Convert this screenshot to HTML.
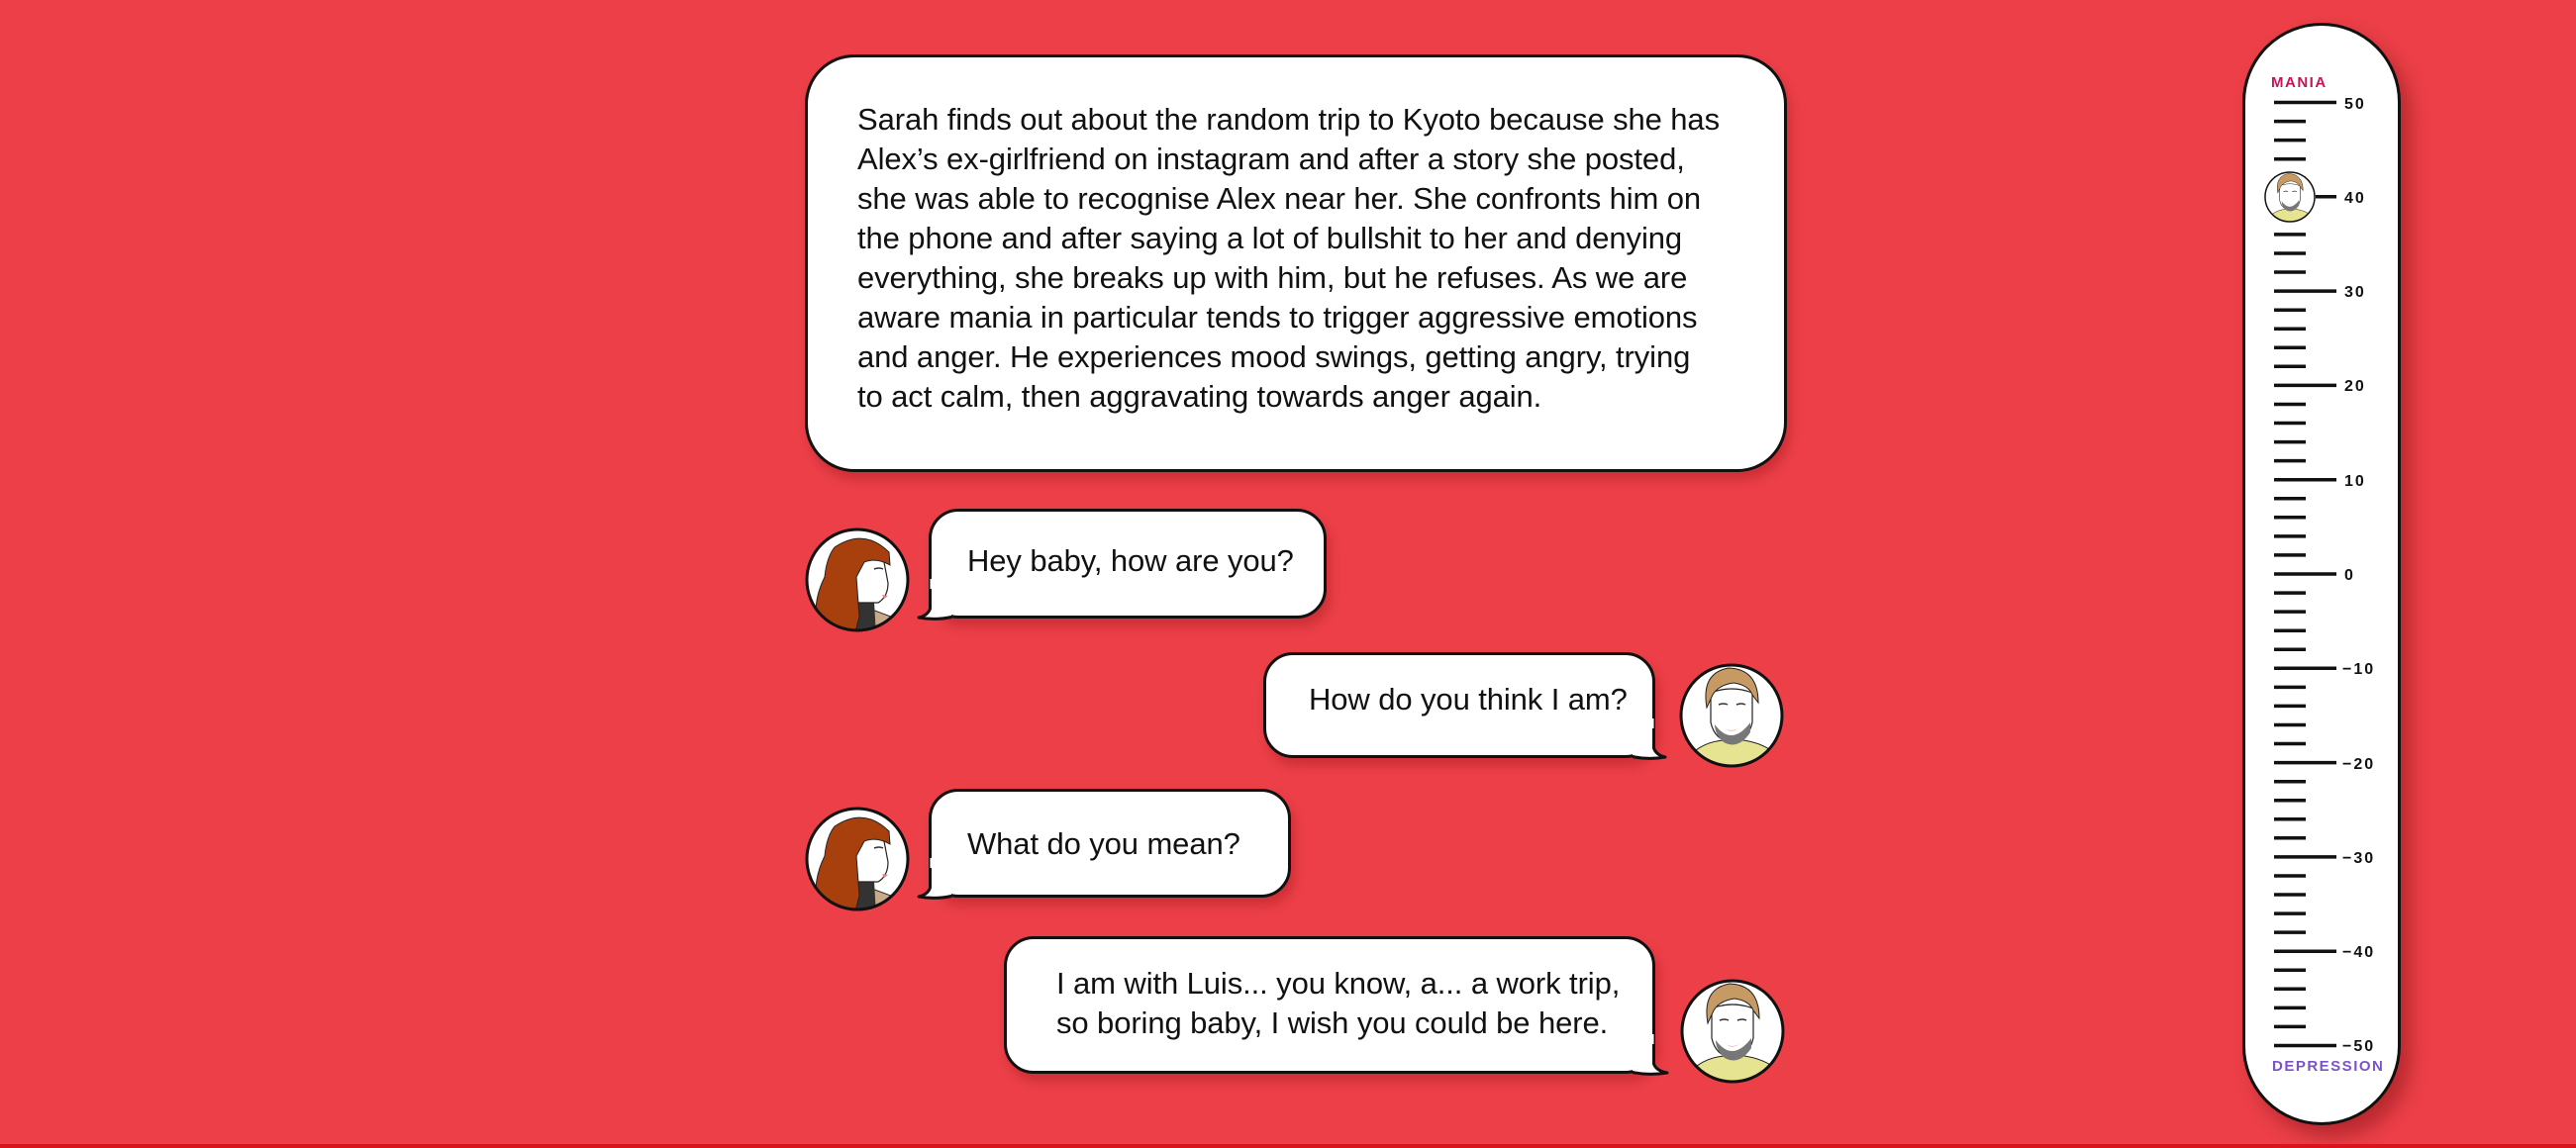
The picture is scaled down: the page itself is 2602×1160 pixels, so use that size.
<!DOCTYPE html>
<html><head><meta charset="utf-8"><style>
html,body{margin:0;padding:0}
body{width:2602px;height:1160px;background:#ec3f48;position:relative;overflow:hidden;font-family:"Liberation Sans",Arial,sans-serif;color:#111}
.strip{position:absolute;left:0;right:0;bottom:0;height:4px;background:#d9141c}
.box{position:absolute;background:#fff;border:3px solid #111;box-sizing:border-box;border-radius:30px;box-shadow:4px 8px 10px rgba(120,0,0,.25)}
.main{left:813px;top:55px;width:992px;height:422px;border-radius:50px}
.t{position:absolute;font-size:31px;line-height:40px;letter-spacing:-0.1px;white-space:nowrap}
.av{position:absolute;width:106px;height:106px}
.therm{position:absolute;left:2265px;top:23px;width:160px;height:1114px;background:#fff;border:3px solid #111;box-sizing:border-box;border-radius:80px;box-shadow:10px 12px 18px rgba(90,0,0,.35)}
.lab{position:absolute;font-weight:bold;font-size:15px;letter-spacing:1.5px;line-height:20px}
.tail{position:absolute;overflow:visible}
</style></head><body>
<svg width="0" height="0" style="position:absolute">
<defs>
<symbol id="sarah" viewBox="0 0 106 106">
<clipPath id="cs"><circle cx="53" cy="53" r="50"/></clipPath>
<circle cx="53" cy="53" r="51" fill="#fff"/>
<g clip-path="url(#cs)">
<path d="M60 80 L100 95 L100 110 L20 110 Z" fill="#c9ab8c" stroke="#222" stroke-width="1"/>
<path d="M40 75 L70 75 L72 110 L40 110 Z" fill="#333"/>
<path d="M48 40 Q66 20 80 35 L84 56 Q84 70 74 76 L54 76 Q46 60 48 40Z" fill="#fff" stroke="#222" stroke-width="1.2"/>
<path d="M78 68 l6 1 l-4 3 z" fill="#e08080"/>
<path d="M30 20 Q60 0 85 25 L86 38 Q72 30 60 35 L52 50 L55 90 L50 110 L15 110 Q5 80 20 50 Q22 30 30 20Z" fill="#a8400d" stroke="#222" stroke-width="1"/>
<path d="M70 42 q5 -2 9 0" stroke="#333" stroke-width="1.5" fill="none"/>
</g>
<circle cx="53" cy="53" r="51" fill="none" stroke="#111" stroke-width="3"/>
</symbol>
<symbol id="alex" viewBox="0 0 106 106">
<clipPath id="ca"><circle cx="53" cy="53" r="50"/></clipPath>
<circle cx="53" cy="53" r="51" fill="#fff"/>
<g clip-path="url(#ca)">
<path d="M5 100 Q20 80 45 78 L65 78 Q90 82 100 95 L100 110 L5 110Z" fill="#e6e391" stroke="#222" stroke-width="1"/>
<path d="M32 30 Q53 22 74 30 L74 60 Q70 78 53 80 Q36 78 32 60Z" fill="#fff" stroke="#222" stroke-width="1.2"/>
<path d="M36 62 Q53 85 72 60 L72 70 Q60 88 45 80 Q36 72 36 62Z" fill="#777"/>
<path d="M46 66 q7 4 14 0 q-7 5 -14 0z" fill="#d88"/>
<path d="M40 42 q5 -2 9 0 M58 42 q5 -2 9 0" stroke="#333" stroke-width="1.5" fill="none"/>
</g>
<path d="M28 45 Q22 10 50 5 Q80 6 80 40 L74 32 Q70 22 55 20 Q40 22 34 32 Z" fill="#c89a63" stroke="#222" stroke-width="1"/>
<circle cx="53" cy="53" r="51" fill="none" stroke="#111" stroke-width="3"/>
</symbol>
</defs>
</svg>

<div class="box main"></div>
<div class="t" style="left:866px;top:101px">Sarah finds out about the random trip to Kyoto because she has<br>Alex’s ex-girlfriend on instagram and after a story she posted,<br>she was able to recognise Alex near her. She confronts him on<br>the phone and after saying a lot of bullshit to her and denying<br>everything, she breaks up with him, but he refuses. As we are<br>aware mania in particular tends to trigger aggressive emotions<br>and anger. He experiences mood swings, getting angry, trying<br>to act calm, then aggravating towards anger again.</div>

<!-- bubble 1 -->
<div class="box" style="left:938px;top:514px;width:402px;height:111px"></div>
<svg class="tail" style="left:925px;top:585px" width="40" height="45"><path d="M14.5 0 L14.5 30 Q12 37 3 39 Q20 42 36 37 L36 0 Z" fill="#fff"/><path d="M14.5 10 L14.5 30 Q12 37 3 39 Q20 42 36 38.5" fill="none" stroke="#111" stroke-width="3" stroke-linejoin="round"/></svg>
<div class="t" style="left:977px;top:547px">Hey baby, how are you?</div>
<svg class="av" style="left:813px;top:533px"><use href="#sarah"/></svg>

<!-- bubble 2 -->
<div class="box" style="left:1276px;top:659px;width:396px;height:107px"></div>
<svg class="tail" style="left:1640px;top:726px" width="45" height="45"><path d="M30.5 0 L30.5 30 Q33 37 42 39 Q25 42 9 37 L9 0 Z" fill="#fff"/><path d="M30.5 10 L30.5 30 Q33 37 42 39 Q25 42 9 38.5" fill="none" stroke="#111" stroke-width="3" stroke-linejoin="round"/></svg>
<div class="t" style="left:1322px;top:687px">How do you think I am?</div>
<svg class="av" style="left:1696px;top:670px"><use href="#alex"/></svg>

<!-- bubble 3 -->
<div class="box" style="left:938px;top:797px;width:366px;height:110px"></div>
<svg class="tail" style="left:925px;top:867px" width="40" height="45"><path d="M14.5 0 L14.5 30 Q12 37 3 39 Q20 42 36 37 L36 0 Z" fill="#fff"/><path d="M14.5 10 L14.5 30 Q12 37 3 39 Q20 42 36 38.5" fill="none" stroke="#111" stroke-width="3" stroke-linejoin="round"/></svg>
<div class="t" style="left:977px;top:833px">What do you mean?</div>
<svg class="av" style="left:813px;top:815px"><use href="#sarah"/></svg>

<!-- bubble 4 -->
<div class="box" style="left:1014px;top:946px;width:658px;height:139px"></div>
<svg class="tail" style="left:1640px;top:1045px" width="50" height="45"><path d="M30.5 0 L30.5 30 Q33 37 44 39 Q25 42 9 37 L9 0 Z" fill="#fff"/><path d="M30.5 10 L30.5 30 Q33 37 44 39 Q25 42 9 38.5" fill="none" stroke="#111" stroke-width="3" stroke-linejoin="round"/></svg>
<div class="t" style="left:1067px;top:974px">I am with Luis... you know, a... a work trip,<br>so boring baby, I wish you could be here.</div>
<svg class="av" style="left:1697px;top:989px"><use href="#alex"/></svg>

<!-- thermometer -->
<div class="therm"></div>
<div class="lab" style="left:2294px;top:74px;color:#c2185b">MANIA</div>
<div class="lab" style="left:2295px;top:1068px;color:#7b52c9">DEPRESSION</div>
<svg style="position:absolute;left:0;top:0" width="2602" height="1160">
<path stroke="#111" stroke-width="3.5" fill="none" d="
M2297 103.5h63 M2297 122.6h32 M2297 141.6h32 M2297 160.7h32 M2297 179.7h32
M2297 198.8h63 M2297 217.9h32 M2297 236.9h32 M2297 256h32 M2297 275h32
M2297 294.1h63 M2297 313.2h32 M2297 332.2h32 M2297 351.3h32 M2297 370.3h32
M2297 389.4h63 M2297 408.5h32 M2297 427.5h32 M2297 446.6h32 M2297 465.6h32
M2297 484.7h63 M2297 503.8h32 M2297 522.8h32 M2297 541.9h32 M2297 560.9h32
M2297 580h63 M2297 599.1h32 M2297 618.1h32 M2297 637.2h32 M2297 656.2h32
M2297 675.3h63 M2297 694.4h32 M2297 713.4h32 M2297 732.5h32 M2297 751.5h32
M2297 770.6h63 M2297 789.7h32 M2297 808.7h32 M2297 827.8h32 M2297 846.8h32
M2297 865.9h63 M2297 885h32 M2297 904h32 M2297 923.1h32 M2297 942.1h32
M2297 961.2h63 M2297 980.3h32 M2297 999.3h32 M2297 1018.4h32 M2297 1037.4h32
M2297 1056.5h63"/>
<g font-family="Liberation Sans, Arial, sans-serif" font-weight="bold" font-size="16" letter-spacing="2" fill="#111">
<text x="2368" y="110">50</text><text x="2368" y="205">40</text><text x="2368" y="300">30</text>
<text x="2368" y="395">20</text><text x="2368" y="491">10</text><text x="2368" y="586">0</text>
<text x="2366" y="681">−10</text><text x="2366" y="777">−20</text><text x="2366" y="872">−30</text>
<text x="2366" y="967">−40</text><text x="2366" y="1062">−50</text>
</g>
<circle cx="2313" cy="199" r="26" fill="#fff"/>
<svg x="2287" y="173" width="52" height="52" viewBox="0 0 106 106"><use href="#alex"/></svg>
</svg>
<div class="strip"></div>
</body></html>
